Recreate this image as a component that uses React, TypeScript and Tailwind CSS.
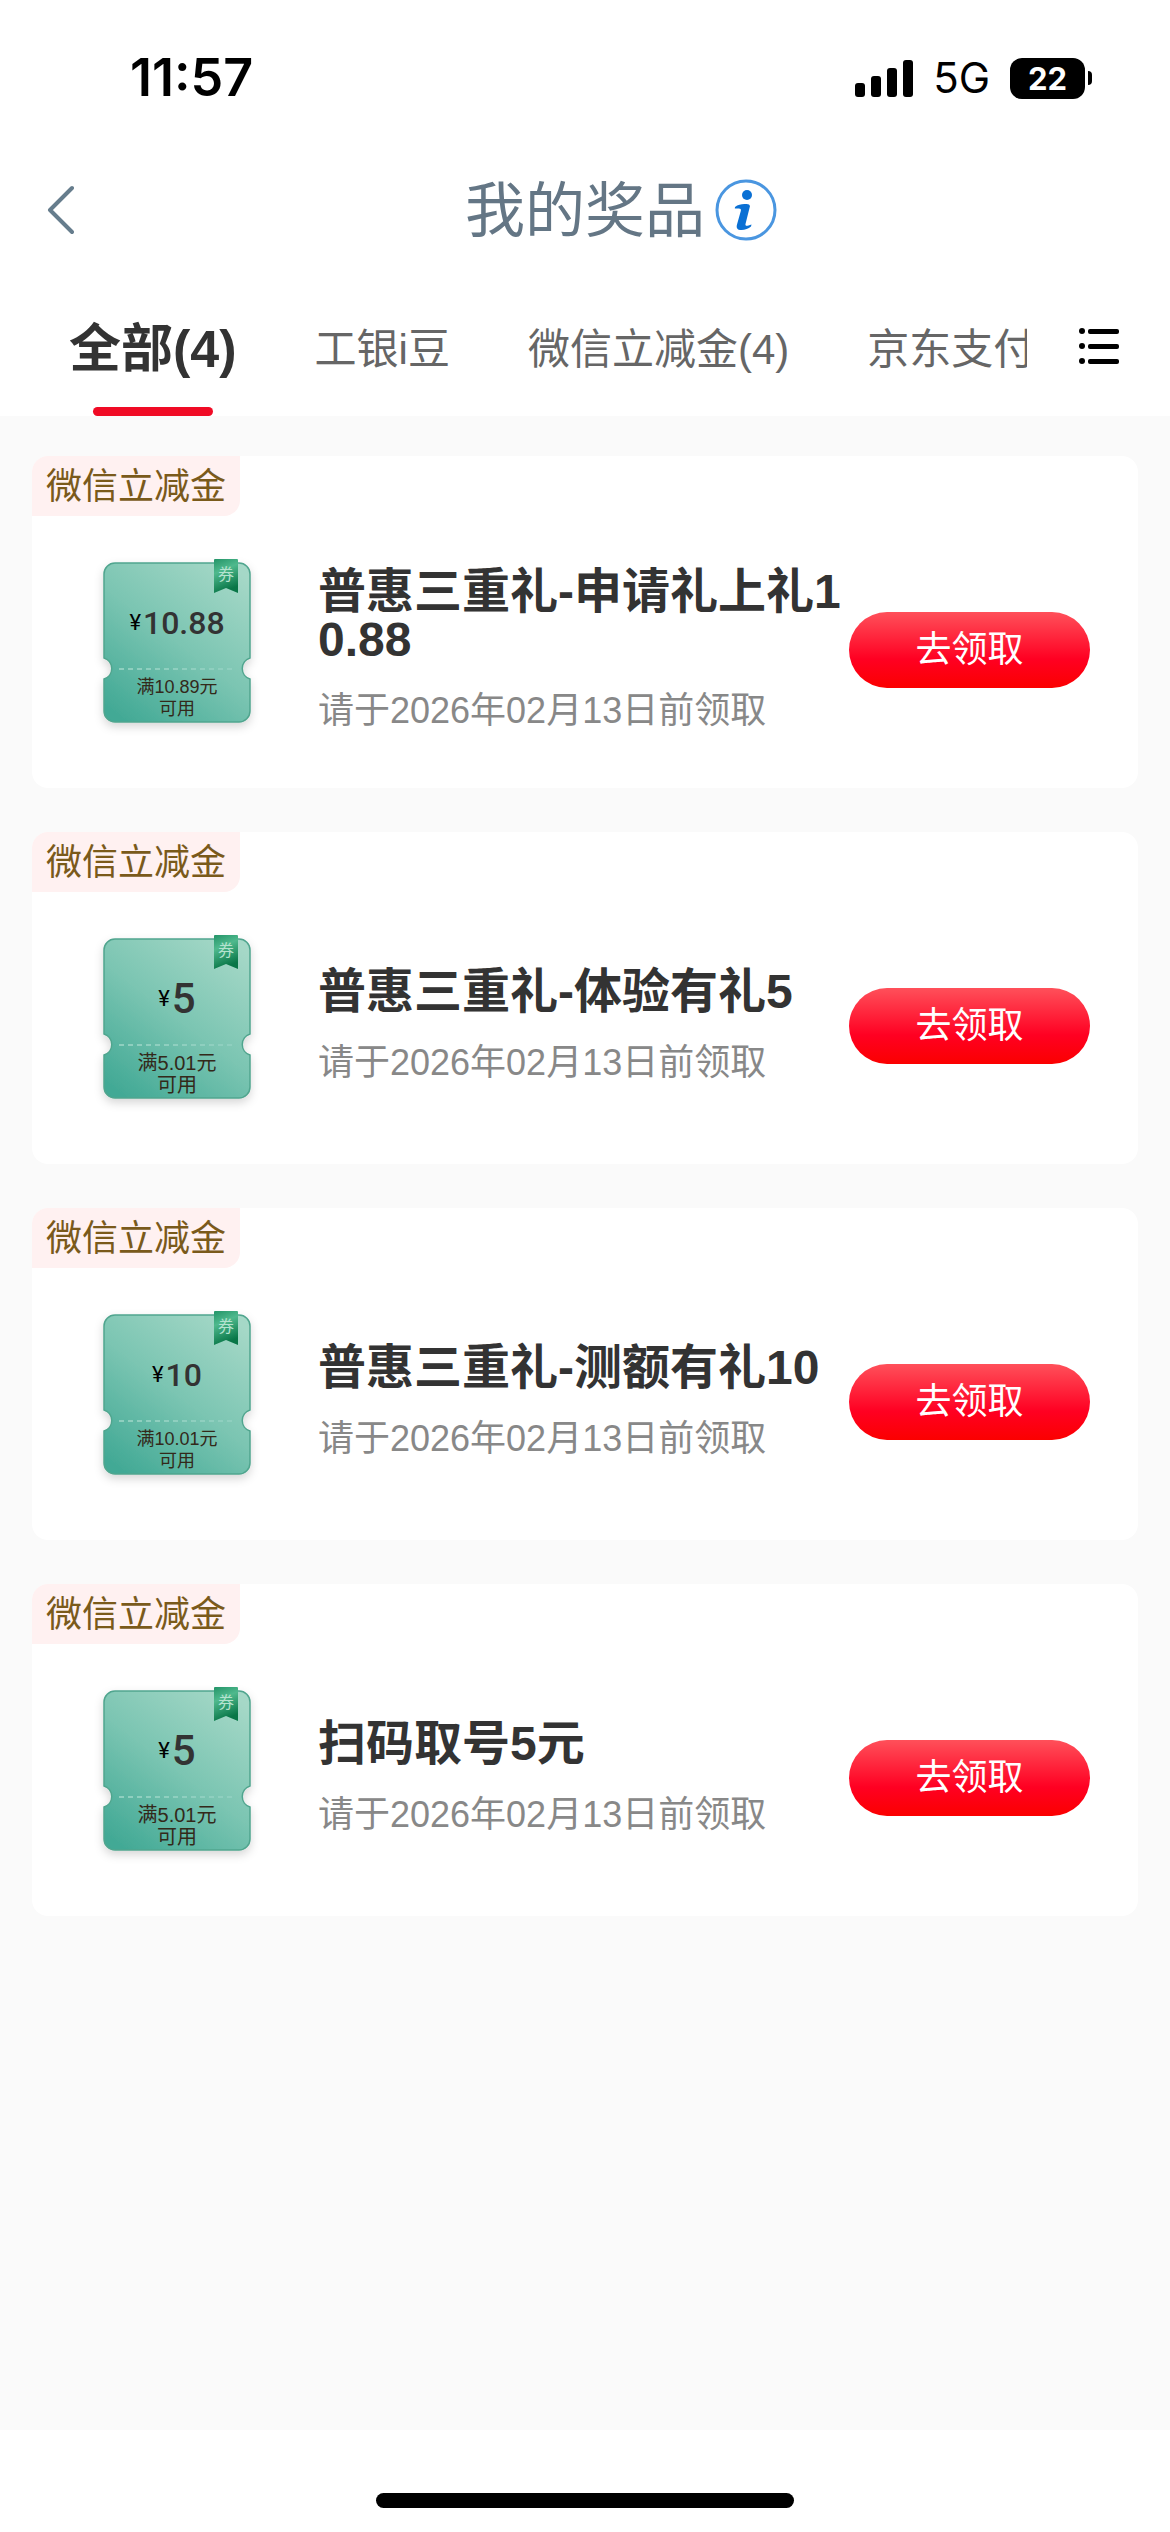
import React from 'react';
import clsx from 'clsx';

type Prize = {
  id: number;
  tag: string;
  amount: string;
  threshold: string;
  title: string;
  deadline: string;
};

const tabs = ['全部(4)', '工银i豆', '微信立减金(4)', '京东支付'];

const prizes: Prize[] = [
  {
    id: 1,
    tag: '微信立减金',
    amount: '10.88',
    threshold: '满10.89元',
    title: '普惠三重礼-申请礼上礼10.88',
    deadline: '请于2026年02月13日前领取',
  },
  {
    id: 2,
    tag: '微信立减金',
    amount: '5',
    threshold: '满5.01元',
    title: '普惠三重礼-体验有礼5',
    deadline: '请于2026年02月13日前领取',
  },
  {
    id: 3,
    tag: '微信立减金',
    amount: '10',
    threshold: '满10.01元',
    title: '普惠三重礼-测额有礼10',
    deadline: '请于2026年02月13日前领取',
  },
  {
    id: 4,
    tag: '微信立减金',
    amount: '5',
    threshold: '满5.01元',
    title: '扫码取号5元',
    deadline: '请于2026年02月13日前领取',
  },
];

export default function App() {
  return (
    <div className="flex min-h-screen flex-col bg-white font-['Liberation_Sans','Noto_Sans_CJK_SC',sans-serif]">
      <StatusBar />
      <TitleBar />
      <TabBar />

      <main className="flex flex-1 flex-col gap-11 bg-[#fafafa] px-8 py-10">
        {prizes.map((prize) => (
          <PrizeCard key={prize.id} prize={prize} />
        ))}
      </main>

      <footer className="flex h-[102px] items-end justify-center pb-6">
        <div className="h-[15px] w-[418px] rounded-full bg-black" />
      </footer>
    </div>
  );
}

function StatusBar() {
  return (
    <div className="flex h-[140px] items-center justify-between pl-[130px] pr-[78px] pt-4 font-['Inter',sans-serif] text-black">
      <span className="text-[52px] font-semibold leading-none">11:57</span>
      <div className="flex items-center gap-5">
        <svg width="58" height="37" viewBox="0 0 58 37" aria-hidden="true">
          <rect x="0" y="23" width="10" height="14" rx="3" />
          <rect x="16" y="16" width="10" height="21" rx="3" />
          <rect x="32" y="8" width="10" height="29" rx="3" />
          <rect x="48" y="0" width="10" height="37" rx="3" />
        </svg>
        <span className="text-[42px] leading-none">5G</span>
        <div className="flex items-center gap-[3px]">
          <span className="flex h-[41px] w-[75px] items-center justify-center rounded-xl bg-black text-[31px] font-bold leading-none text-white">
            22
          </span>
          <span className="h-[14px] w-1 rounded-r-full bg-black" />
        </div>
      </div>
    </div>
  );
}

function TitleBar() {
  return (
    <header className="grid h-[140px] grid-cols-[1fr_auto_1fr] items-center">
      <button type="button" aria-label="返回" className="justify-self-start pl-[46px]">
        <svg width="28" height="50" viewBox="0 0 28 50" fill="none" aria-hidden="true">
          <path
            d="M26 3 4 25l22 22"
            stroke="#667d8d"
            strokeWidth="4"
            strokeLinecap="round"
            strokeLinejoin="round"
          />
        </svg>
      </button>
      <h1 className="pt-1 text-[60px] leading-[72px] text-[#647685]">我的奖品</h1>
      <button type="button" aria-label="说明" className="ml-2.5 justify-self-start">
        <svg
          width="62"
          height="62"
          viewBox="0 0 62 62"
          className="overflow-visible"
          aria-hidden="true"
        >
          <circle cx="31" cy="31" r="29" fill="none" stroke="#4a96e0" strokeWidth="3" />
          <circle cx="32" cy="16" r="5" fill="#0a70d4" />
          <path
            d="M20 28c4-3 9-3.500 14-2.500l1 1.500-4.500 18c-.4 1.700.7 2.200 3 1.500l3-1-.5 2c-3 2.500-7 4-11 3.500-3-.4-3.800-2.500-3-5.500l3.800-13.500c.5-2-.3-2.700-2.300-2.600l-3.700.2Z"
            fill="#0a70d4"
          />
        </svg>
      </button>
    </header>
  );
}

function TabBar() {
  return (
    <nav className="flex h-[136px]">
      <div className="flex min-w-0 flex-1 gap-[78px] overflow-hidden pl-[69px]">
        {tabs.map((tab, index) => {
          const active = index === 0;
          return (
            <button
              key={tab}
              type="button"
              aria-current={active ? 'page' : undefined}
              className={clsx(
                'relative h-full shrink-0 whitespace-nowrap pt-0.5',
                active ? 'text-[52px] font-bold text-[#333]' : 'text-[42px] text-[#666]',
              )}
            >
              {tab}
              {active ? (
                <span className="absolute inset-x-0 bottom-0 mx-auto h-[9px] w-[120px] rounded-full bg-[#f00b25]" />
              ) : null}
            </button>
          );
        })}
      </div>
      <button type="button" aria-label="全部分类" className="flex w-[143px] items-center justify-center">
        <svg width="40" height="36" viewBox="0 0 40 36" className="mb-1" aria-hidden="true">
          <circle cx="3" cy="3" r="3" />
          <circle cx="3" cy="18" r="3" />
          <circle cx="3" cy="33" r="3" />
          <rect x="9" y="1" width="31" height="5" rx="2" />
          <rect x="9" y="16" width="31" height="5" rx="2" />
          <rect x="9" y="31" width="31" height="5" rx="2" />
        </svg>
      </button>
    </nav>
  );
}

function PrizeCard({ prize }: { prize: Prize }) {
  return (
    <article className="flex min-h-[332px] flex-col items-start overflow-hidden rounded-2xl bg-white">
      <span className="flex h-[60px] items-center rounded-br-2xl bg-[#fff1f1] px-3.5 pt-0.5 text-[36px] leading-none text-[#7a5a1b]">
        {prize.tag}
      </span>
      <div className="flex w-full flex-1 items-center pl-[71px] pr-12">
        <Coupon amount={prize.amount} threshold={prize.threshold} />
        <div className="ml-[67px] min-w-0 flex-1 pt-0.5">
          <h2 className="break-all text-[48px] font-bold leading-[48px] text-[#333]">
            {prize.title}
          </h2>
          <p className="mt-5 text-[36px] leading-[54px] text-[#888]">{prize.deadline}</p>
        </div>
        <button
          type="button"
          className="mb-1 h-[76px] w-[241px] shrink-0 rounded-full bg-[linear-gradient(180deg,#ff505a_0%,#ff0022_62%,#fb0000_100%)] text-[36px] leading-none text-white"
        >
          去领取
        </button>
      </div>
    </article>
  );
}

function Coupon({ amount, threshold }: { amount: string; threshold: string }) {
  // a single digit leaves room for larger type
  const short = amount.length < 2;

  return (
    <div className="relative mb-5 h-[161px] w-[148px] shrink-0 text-center">
      <CouponShape />
      <div className="relative flex h-[114px] items-center justify-center gap-0.5 pt-2 font-['Roboto',sans-serif]">
        <span className="text-[22px] leading-none text-black">¥</span>
        <span
          className={clsx(
            'font-medium leading-none text-[#333]',
            short ? 'text-[42px]' : 'text-[32px]',
          )}
        >
          {amount}
        </span>
      </div>
      <div
        className={clsx(
          'relative leading-[22px] text-[#33291a]',
          short ? 'text-[20px]' : 'text-[18px]',
        )}
      >
        <p>{threshold}</p>
        <p>可用</p>
      </div>
    </div>
  );
}

function CouponShape() {
  return (
    <svg
      width="148"
      height="161"
      viewBox="0 0 148 161"
      className="absolute inset-0 overflow-visible"
      aria-hidden="true"
    >
      <defs>
        <linearGradient id="coupon-fill" x1="0.15" y1="1" x2="0.85" y2="0">
          <stop offset="0" stopColor="#42a995" />
          <stop offset="0.5" stopColor="#7bc5b2" />
          <stop offset="1" stopColor="#a5d8c7" />
        </linearGradient>
        <linearGradient id="coupon-ribbon" x1="0" y1="0" x2="0.3" y2="1">
          <stop offset="0" stopColor="#239468" />
          <stop offset="0.4" stopColor="#4fb98d" />
          <stop offset="1" stopColor="#087647" />
        </linearGradient>
        <filter id="coupon-shadow" x="-20%" y="-20%" width="140%" height="140%">
          <feDropShadow dx="0" dy="4" stdDeviation="5" floodColor="#000" floodOpacity="0.16" />
        </filter>
      </defs>
      <path
        d="M12 1h124a11 11 0 0 1 11 11v84a11 11 0 0 0 0 21v32a11 11 0 0 1-11 11H12A11 11 0 0 1 1 149v-32a11 11 0 0 0 0-21V12A11 11 0 0 1 12 1Z"
        fill="url(#coupon-fill)"
        stroke="#50a58e"
        strokeWidth="1.5"
        filter="url(#coupon-shadow)"
      />
      <path d="M16 107h117" stroke="#8fcfbf" strokeWidth="2" strokeDasharray="5 4" />
      <path d="M112-3h22a1 1 0 0 1 1 1v33l-12-5-12 5V-2a1 1 0 0 1 1-1Z" fill="url(#coupon-ribbon)" />
      <text x="123" y="18" textAnchor="middle" fill="#b4e2cf" className="text-[16px]">
        券
      </text>
    </svg>
  );
}
